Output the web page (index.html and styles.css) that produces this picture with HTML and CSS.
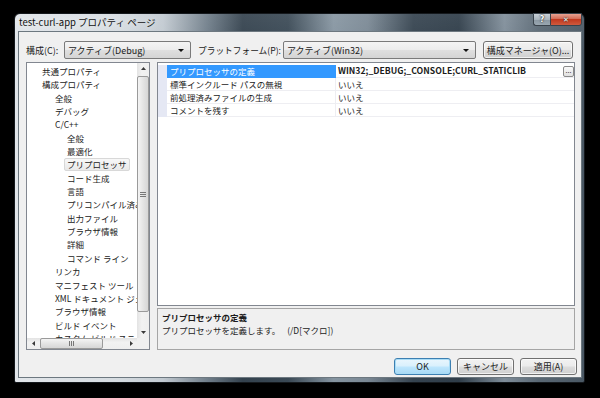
FILE: index.html
```html
<!DOCTYPE html>
<html lang="ja">
<head>
    <meta charset="UTF-8">
    <title>test-curl-app プロパティ ページ</title>
    <link rel="stylesheet" href="styles.css">
</head>
<body>
    <div class="window">
        <div class="titlebar">
            <span class="title">test-curl-app プロパティ ページ</span>
            <div class="caption-btns">
                <span class="cap-btn help">?</span>
                <span class="cap-btn close">✕</span>
            </div>
        </div>

        <div class="client">
            <div class="toolbar">
                <label class="lbl lbl-config">構成(C):</label>
                <div class="select sel-config"><span>アクティブ(Debug)</span><i class="drop"></i></div>
                <label class="lbl lbl-platform">プラットフォーム(P):</label>
                <div class="select sel-platform"><span>アクティブ(Win32)</span><i class="drop"></i></div>
                <button class="btn btn-manager">構成マネージャ(O)...</button>
            </div>

            <div class="panes">
                <div class="tree">
                    <ul class="tree-list">
                        <li class="l0">共通プロパティ</li>
                        <li class="l0">構成プロパティ</li>
                        <li class="l1">全般</li>
                        <li class="l1">デバッグ</li>
                        <li class="l1">C/C++</li>
                        <li class="l2">全般</li>
                        <li class="l2">最適化</li>
                        <li class="l2"><span class="sel">プリプロセッサ</span></li>
                        <li class="l2">コード生成</li>
                        <li class="l2">言語</li>
                        <li class="l2">プリコンパイル済みヘッダー</li>
                        <li class="l2">出力ファイル</li>
                        <li class="l2">ブラウザ情報</li>
                        <li class="l2">詳細</li>
                        <li class="l2">コマンド ライン</li>
                        <li class="l1">リンカ</li>
                        <li class="l1">マニフェスト ツール</li>
                        <li class="l1">XML ドキュメント ジェネレータ</li>
                        <li class="l1">ブラウザ情報</li>
                        <li class="l1">ビルド イベント</li>
                        <li class="l1">カスタム ビルド ステップ</li>
                    </ul>
                    <div class="vscroll">
                        <span class="sb-arrow"><svg width="5" height="3" viewBox="0 0 5 3"><path d="M0 3L2.5 0L5 3Z" fill="#3a3a3a"/></svg></span>
                        <span class="vthumb"><i class="grip"></i></span>
                        <span class="sb-fill"></span>
                        <span class="sb-arrow"><svg width="5" height="3" viewBox="0 0 5 3"><path d="M0 0L2.5 3L5 0Z" fill="#3a3a3a"/></svg></span>
                    </div>
                    <div class="hscroll">
                        <span class="sb-arrow"><svg width="3" height="5" viewBox="0 0 3 5"><path d="M3 0L0 2.5L3 5Z" fill="#3a3a3a"/></svg></span>
                        <span class="hthumb"><i class="grip"></i></span>
                        <span class="sb-fill"></span>
                        <span class="sb-arrow"><svg width="3" height="5" viewBox="0 0 3 5"><path d="M0 0L3 2.5L0 5Z" fill="#3a3a3a"/></svg></span>
                    </div>
                    <span class="sb-corner"></span>
                </div>

                <div class="right">
                    <div class="grid">
                        <div class="row selected">
                            <span class="gutter"></span>
                            <span class="name">プリプロセッサの定義</span>
                            <span class="value bold">WIN32;_DEBUG;_CONSOLE;CURL_STATICLIB<b class="more">...</b></span>
                        </div>
                        <div class="row">
                            <span class="gutter"></span>
                            <span class="name">標準インクルード パスの無視</span>
                            <span class="value">いいえ</span>
                        </div>
                        <div class="row">
                            <span class="gutter"></span>
                            <span class="name">前処理済みファイルの生成</span>
                            <span class="value">いいえ</span>
                        </div>
                        <div class="row">
                            <span class="gutter"></span>
                            <span class="name">コメントを残す</span>
                            <span class="value">いいえ</span>
                        </div>
                    </div>
                    <div class="desc">
                        <p class="desc-title">プリプロセッサの定義</p>
                        <p class="desc-text">プリプロセッサを定義します。<span class="switch">(/D[マクロ])</span></p>
                    </div>
                </div>
            </div>

            <div class="footer">
                <button class="btn btn-default">OK</button>
                <button class="btn">キャンセル</button>
                <button class="btn">適用(A)</button>
            </div>
        </div>
    </div>
</body>
</html>
```

FILE: styles.css
```css
:root {
    --ui-font: "Noto Sans CJK JP", "Liberation Sans", sans-serif;
    --client-bg: #f0f0f0;
    --panel-border: #828790;
    --text: #1b1b1b;
    --select-blue: #3399ff;
}

html {
    overflow: hidden;
}

body {
    margin: 0;
    background-color: #000;
    font-family: var(--ui-font);
    font-size: 8.5px;
    color: var(--text);
    height: 398px;
    overflow: hidden;
}

/* window frame (aero glass) */
.window {
    margin: 13px 0 0 14px;
    width: 571px;
    height: 370px;
    box-sizing: border-box;
    border: 1px solid #15191d;
    border-radius: 6px 6px 2px 2px;
    padding: 0 2px 4px 3px;
    display: flex;
    flex-direction: column;
    background:
        linear-gradient(to bottom, rgba(255, 255, 255, 0.08), rgba(0, 0, 0, 0) 40px),
        linear-gradient(to right, #e2e6ea 0%, #d6dce1 18%, #c2cad1 26%, #6e7c88 34%, #34424e 40%, #3a4955 48%, #8695a1 56%, #7a8894 62%, #35434f 70%, #2f3d49 78%, #7f8d99 86%, #5a6874 92%, #4a5864 100%);
}

.titlebar {
    height: 17px;
    display: flex;
    align-items: flex-start;
    justify-content: space-between;
    flex-shrink: 0;
}

.title {
    font-size: 9.5px;
    line-height: 17px;
    padding-left: 1px;
    color: #111;
    text-shadow: 0 0 6px rgba(255, 255, 255, 0.9);
}

.caption-btns {
    display: flex;
    margin-top: -1px;
}

.cap-btn {
    height: 13px;
    display: flex;
    align-items: center;
    justify-content: center;
    color: #fff;
    font-family: "DejaVu Sans", sans-serif;
    font-weight: bold;
    font-size: 8px;
    text-shadow: 0 0 1px #222, 0 0 2px #222;
    box-sizing: border-box;
    border: 1px solid #3a434c;
}

.cap-btn.help {
    width: 17px;
    border-radius: 0 0 0 3px;
    border-right: none;
    background: linear-gradient(to bottom, #c9d1d8 0%, #a9b4bd 50%, #8a97a2 51%, #9aa7b1 100%);
}

.cap-btn.close {
    width: 32px;
    border-radius: 0 0 3px 0;
    background: linear-gradient(to bottom, #e6a292 0%, #d46b55 45%, #c2391f 50%, #cf5a3e 100%);
    font-size: 7px;
}

/* client area */
.client {
    flex: 1;
    min-height: 0;
    overflow: hidden;
    background-color: var(--client-bg);
    border: 1px solid #6d7880;
    display: flex;
    flex-direction: column;
    padding: 9px 0 0 7px;
}

.toolbar {
    display: flex;
    align-items: center;
    height: 18px;
    white-space: nowrap;
}

.lbl {
    display: block;
    font-size: 9px;
}

.lbl-config {
    width: 38px;
}

.lbl-platform {
    width: 85px;
    margin-left: 7px;
    font-size: 8.7px;
}

.select {
    height: 18px;
    box-sizing: border-box;
    border: 1px solid #7a7a7a;
    border-radius: 2px;
    background: linear-gradient(to bottom, #f4f4f4 0%, #ececec 48%, #dfdfdf 52%, #d4d4d4 100%);
    display: flex;
    align-items: center;
    justify-content: space-between;
    padding: 0 6px 0 3px;
    font-size: 9px;
}

.sel-config {
    width: 127px;
}

.sel-platform {
    width: 193px;
}

.drop {
    width: 0;
    height: 0;
    border-left: 3px solid transparent;
    border-right: 3px solid transparent;
    border-top: 3px solid #111;
    margin-top: 1px;
}

.btn {
    font-family: var(--ui-font);
    font-size: 9px;
    color: var(--text);
    height: 18px;
    width: 57px;
    padding: 0;
    box-sizing: border-box;
    border: 1px solid #707070;
    border-radius: 3px;
    background: linear-gradient(to bottom, #f2f2f2 0%, #ebebeb 48%, #dddddd 52%, #cfcfcf 100%);
    box-shadow: inset 0 0 0 1px rgba(255, 255, 255, 0.7);
}

.btn-manager {
    width: 90px;
    margin-left: 7px;
}

.btn-default {
    border-color: #3c7fb1;
    background: linear-gradient(to bottom, #eaf6fd 0%, #d9f0fc 48%, #bee6fd 52%, #a7d9f5 100%);
    box-shadow: inset 0 0 0 1px #a8dcf6;
}

/* panes */
.panes {
    display: flex;
    margin-top: 3px;
    gap: 7px;
}

.tree {
    width: 124px;
    height: 288px;
    box-sizing: border-box;
    border: 1px solid var(--panel-border);
    background-color: #fff;
    display: grid;
    grid-template-columns: 110px 12px;
    grid-template-rows: 275px 11px;
    overflow: hidden;
}

.tree-list {
    list-style: none;
    margin: 0;
    padding: 2px 0 0 0;
    overflow: hidden;
    white-space: nowrap;
}

.tree-list li {
    height: 13.35px;
    line-height: 13.35px;
    font-size: 8.5px;
}

.tree-list .l0 { padding-left: 15px; }
.tree-list .l1 { padding-left: 28px; }
.tree-list .l2 { padding-left: 40px; }

.tree-list .sel {
    display: inline-block;
    line-height: 11px;
    padding: 0 2px;
    margin-left: -3px;
    border: 1px solid #d8d8d8;
    border-radius: 2px;
    background: linear-gradient(to bottom, #f8f8f8, #e9e9e9);
}

/* scroll bars */
.vscroll {
    display: flex;
    flex-direction: column;
    overflow: hidden;
    background: linear-gradient(to right, #e3e3e3, #f2f2f2 40%, #eeeeee);
}

.hscroll {
    display: flex;
    overflow: hidden;
    background: linear-gradient(to bottom, #e3e3e3, #f2f2f2 40%, #eeeeee);
}

.sb-corner {
    background-color: #f0f0f0;
}

.sb-arrow {
    width: 12px;
    height: 11px;
    display: flex;
    align-items: center;
    justify-content: center;
    flex-shrink: 0;
}

.sb-arrow svg {
    display: block;
}

.sb-fill {
    flex: 1;
}

.vthumb {
    margin: 2px 0 0 0;
    height: 236px;
    flex-shrink: 0;
    box-sizing: border-box;
    border: 1px solid #9a9a9a;
    border-radius: 2px;
    background: linear-gradient(to right, #f4f4f4, #e4e4e4 50%, #d6d6d6);
    display: flex;
    align-items: center;
    justify-content: center;
}

.hthumb {
    margin-left: 1px;
    width: 63px;
    flex-shrink: 0;
    box-sizing: border-box;
    border: 1px solid #9a9a9a;
    border-radius: 2px;
    background: linear-gradient(to bottom, #f4f4f4, #e4e4e4 50%, #d6d6d6);
    display: flex;
    align-items: center;
    justify-content: center;
}

.vthumb .grip {
    width: 6px;
    height: 5px;
    background: repeating-linear-gradient(to bottom, #777 0 1px, transparent 1px 2px);
}

.hthumb .grip {
    width: 5px;
    height: 5px;
    background: repeating-linear-gradient(to right, #777 0 1px, transparent 1px 2px);
}

/* property grid */
.right {
    width: 418px;
    height: 288px;
    display: flex;
    flex-direction: column;
    gap: 2px;
}

.grid {
    height: 244px;
    box-sizing: border-box;
    border: 1px solid var(--panel-border);
    background-color: #fff;
    padding-top: 2px;
}

.row {
    display: grid;
    grid-template-columns: 9px 169px 1fr;
    height: 13px;
    line-height: 12px;
}

.row .gutter {
    background-color: #e5e8f4;
}

.row .name {
    padding-left: 3px;
    border-bottom: 1px solid #eeeef2;
    border-right: 1px solid #eeeef2;
    white-space: nowrap;
}

.row .value {
    padding-left: 2px;
    border-bottom: 1px solid #eeeef2;
    display: flex;
    justify-content: space-between;
    align-items: center;
}

.row.selected .name {
    background-color: var(--select-blue);
    color: #fff;
    border-color: var(--select-blue);
}

.value.bold {
    font-weight: bold;
    font-size: 8.7px;
}

.more {
    display: inline-block;
    width: 11px;
    height: 11px;
    box-sizing: border-box;
    border: 1px solid #8a8a8a;
    border-radius: 2px;
    background: linear-gradient(to bottom, #fafafa, #e0e0e0);
    font-size: 7px;
    font-weight: normal;
    line-height: 7px;
    text-align: center;
}

.desc {
    flex: 1;
    box-sizing: border-box;
    border: 1px solid #a5a5a5;
    padding: 2px 4px;
}

.desc p {
    margin: 0;
    line-height: 13px;
}

.desc-title {
    font-weight: bold;
}

.desc-text .switch {
    margin-left: 7px;
}

/* dialog buttons */
.footer {
    display: flex;
    justify-content: flex-end;
    gap: 6px;
    margin-top: 8px;
    padding-right: 4px;
}

.footer .btn {
    height: 17px;
}
```
